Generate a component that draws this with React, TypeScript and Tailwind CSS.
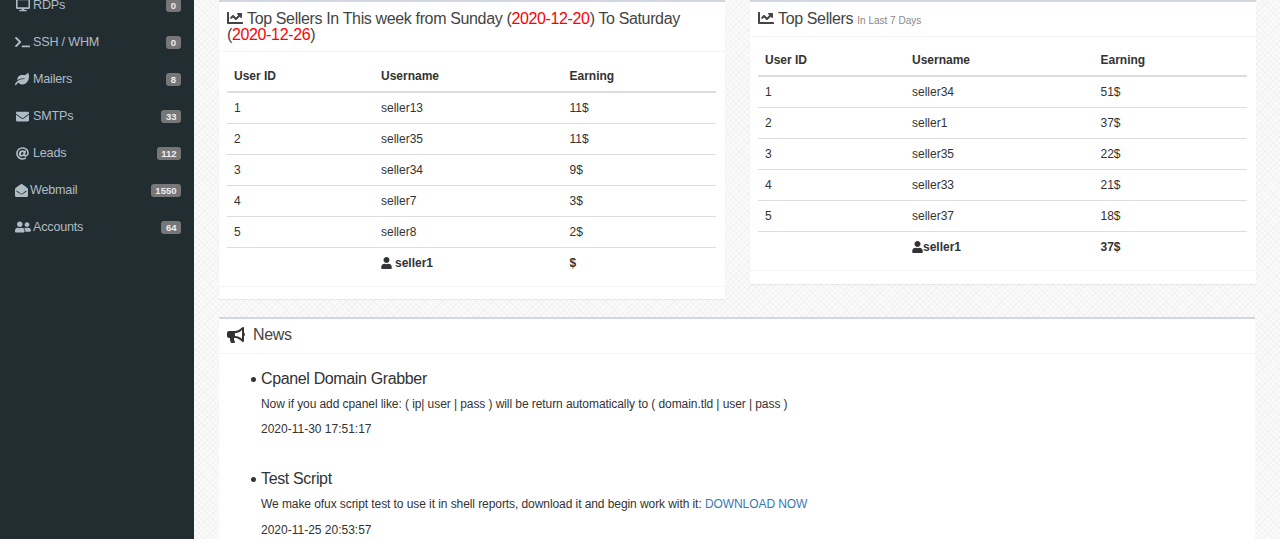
import React from "react";
import { FaDesktop, FaTerminal, FaLeaf, FaEnvelope, FaAt, FaEnvelopeOpen, FaUserFriends, FaChartLine, FaUser, FaBullhorn } from "react-icons/fa";

const nav = [
  { icon: <FaTerminal className="w-[15px] h-[14px]" />, label: "SSH / WHM", n: "0", w: "w-[18px]" },
  { icon: <FaLeaf className="w-[14px] h-[14px]" />, label: "Mailers", n: "8", w: "w-[18px]" },
  { icon: <FaEnvelope className="w-[13px] h-[13px] ml-[1px]" />, label: "SMTPs", n: "33", w: "w-[18px]" },
  { icon: <FaAt className="w-[13px] h-[13px] ml-[1px]" />, label: "Leads", n: "112", w: "w-[18px]" },
  { icon: <FaEnvelopeOpen className="w-[13px] h-[13px]" />, label: "Webmail", n: "1550", w: "w-[15px]" },
  { icon: <FaUserFriends className="w-[16px] h-[14px]" />, label: "Accounts", n: "64", w: "w-[18px]" },
];

function NavRow({ icon, label, n, w }: { icon: React.ReactNode; label: string; n: string; w: string }) {
  return (
    <div className="h-[37px] flex items-center pl-[15px] pr-[13px] text-[12.6px] tracking-[-0.2px] text-[#aebcc5]">
      <span className={`${w} flex items-center`}>{icon}</span>
      <span>{label}</span>
      <span className="ml-auto bg-[#777777] text-[#eeeeee] text-[9.5px] tracking-normal font-bold rounded-[3px] px-[4.5px] h-[13px] leading-[13px] text-center min-w-[15px]">{n}</span>
    </div>
  );
}

function Table({ rows, me, earning, box }: { rows: string[][]; me: React.ReactNode; earning: string; box: string }) {
  return (
    <div className={box}>
      <div className="grid grid-cols-[154px_188.5px_1fr] text-[12px] text-[#333333]">
        <div className="col-span-3 grid grid-cols-subgrid font-bold h-[33px] items-center border-b-2 border-[#dddddd] pl-[7px]">
          <span>User ID</span><span>Username</span><span>Earning</span>
        </div>
        {rows.map((r) => (
          <div key={r[0]} className="col-span-3 grid grid-cols-subgrid h-[31px] items-center border-b border-[#dddddd] pl-[7px]">
            <span>{r[0]}</span><span>{r[1]}</span><span>{r[2]}</span>
          </div>
        ))}
        <div className="col-span-3 grid grid-cols-subgrid h-[30px] items-center pl-[7px] font-bold">
          <span></span>{me}<span>{earning}</span>
        </div>
      </div>
    </div>
  );
}

function Bullet() {
  return <span className="w-[5px] h-[5px] rounded-full bg-[#333333] shrink-0 ml-[32px] mr-[5px] mt-[7px]"></span>;
}

export default function App() {
  return (
    <div className="h-[539px] w-[1280px] overflow-hidden flex font-['Liberation_Sans',Arial,sans-serif] bg-[#fafafa] bg-[repeating-linear-gradient(45deg,rgba(0,0,0,0.025)_0,rgba(0,0,0,0.025)_1px,transparent_1px,transparent_4px),repeating-linear-gradient(-45deg,rgba(0,0,0,0.025)_0,rgba(0,0,0,0.025)_1px,transparent_1px,transparent_4px)]">
      <aside className="w-[194px] shrink-0 bg-[#222d32] overflow-hidden">
        <div className="-mt-[13.5px]">
          <NavRow icon={<FaDesktop className="w-[14px] h-[14px] ml-[1px]" />} label="RDPs" n="0" w="w-[18px]" />
          {nav.map((x) => <NavRow key={x.label} {...x} />)}
        </div>
      </aside>
      <main className="ml-[25px] w-[1037px] flex flex-col">
        <div className="flex items-start gap-[25px] h-[317px] shrink-0">
          <section className="w-[506px] h-[299px] flex flex-col bg-white border-t-2 border-[#d2d6de] shadow-[0_1px_1px_rgba(0,0,0,0.06)]">
            <h3 className="text-[16px] tracking-[-0.36px] leading-[16px] text-[#444444] px-[8px] pt-[8px] border-b border-[#f4f4f4] h-[50px] shrink-0">
              <FaChartLine className="inline w-[16px] h-[16px] mr-[4px] align-[-2px]" />
              Top Sellers In This week from Sunday (<span className="text-[#ff0000]">2020-12-20</span>) To Saturday (<span className="text-[#ff0000]">2020-12-26</span>)
            </h3>
            <Table
              box="pl-[8px] pr-[9px] pt-[8px]"
              rows={[["1","seller13","11$"],["2","seller35","11$"],["3","seller34","9$"],["4","seller7","3$"],["5","seller8","2$"]]}
              me={<span className="flex items-center gap-[3px]"><FaUser className="w-[11px] h-[12px]" />seller1</span>}
              earning="$"
            />
            <div className="mt-auto h-[13px] border-t border-[#f4f4f4]"></div>
          </section>
          <section className="w-[506px] h-[284px] flex flex-col bg-white border-t-2 border-[#d2d6de] shadow-[0_1px_1px_rgba(0,0,0,0.06)]">
            <h3 className="text-[16px] tracking-[-0.36px] leading-[16px] text-[#444444] px-[8px] pt-[8px] border-b border-[#f4f4f4] h-[35px] shrink-0">
              <FaChartLine className="inline w-[16px] h-[16px] mr-[4px] align-[-2px]" />
              Top Sellers <small className="text-[10px] tracking-normal text-[#888888]">In Last 7 Days</small>
            </h3>
            <Table
              box="pl-[8px] pr-[9px] pt-[7px]"
              rows={[["1","seller34","51$"],["2","seller1","37$"],["3","seller35","22$"],["4","seller33","21$"],["5","seller37","18$"]]}
              me={<span className="flex items-center"><FaUser className="w-[11px] h-[12px]" />seller1</span>}
              earning="37$"
            />
            <div className="mt-auto h-[14px] border-t border-[#f4f4f4]"></div>
          </section>
        </div>
        <section className="w-[1036px] bg-white border-t-2 border-[#d2d6de] flex-1 min-h-0">
          <h3 className="text-[16px] tracking-[-0.36px] leading-[16px] text-[#444444] pl-[8px] pb-[2px] h-[35px] border-b border-[#f4f4f4] flex items-center gap-[8px]">
            <FaBullhorn className="w-[18px] h-[18px] text-[#333333]" /><span>News</span>
          </h3>
          <ul className="pt-[16px] text-[#333333]">
            <li className="flex mb-[32px]">
              <Bullet />
              <div>
                <div className="text-[16px] tracking-[-0.36px] leading-[18px]">Cpanel Domain Grabber</div>
                <p className="text-[12px] leading-[17px] mt-[8px] tracking-[-0.076px]">Now if you add cpanel like: ( ip| user | pass ) will be return automatically to ( domain.tld | user | pass )</p>
                <p className="text-[12px] leading-[17px] mt-[8px]">2020-11-30 17:51:17</p>
              </div>
            </li>
            <li className="flex">
              <Bullet />
              <div>
                <div className="text-[16px] tracking-[-0.36px] leading-[18px]">Test Script</div>
                <p className="text-[12px] leading-[17px] mt-[8px] tracking-[-0.076px]">We make ofux script test to use it in shell reports, download it and begin work with it: <a className="text-[#337ab7]">DOWNLOAD NOW</a></p>
                <p className="text-[12px] leading-[17px] mt-[9px]">2020-11-25 20:53:57</p>
              </div>
            </li>
          </ul>
        </section>
      </main>
    </div>
  );
}
